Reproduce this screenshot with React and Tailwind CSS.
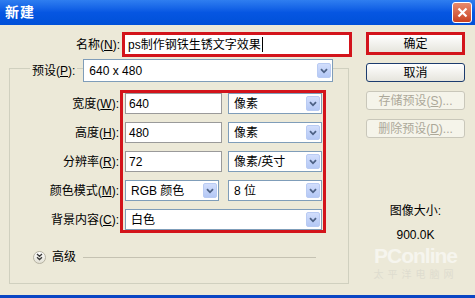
import React from 'react'

const FONT = { fontFamily: '"Liberation Sans", "Noto Sans CJK SC", sans-serif' }

function Arrow() {
  return (
    <span className="w-[14px] h-[15px] mr-[1px] shrink-0 rounded-[2px] border border-[#b9cbf3] bg-linear-to-b from-[#d2defc] to-[#b4c8f5] flex items-center justify-center">
      <svg width="8" height="6" viewBox="0 0 8 6">
        <path d="M1 1.2 L4 4.3 L7 1.2" stroke="#4d6185" strokeWidth="1.8" fill="none" />
      </svg>
    </span>
  )
}

function Select({ value, className = '' }) {
  return (
    <div className={`flex items-center bg-white border border-[#7f9db9] ${className}`}>
      <span className="flex-1 pl-[5px] truncate">{value}</span>
      <Arrow />
    </div>
  )
}

function Input({ value, className = '' }) {
  return (
    <div className={`flex items-center bg-white border border-[#9a9a9a] ${className}`}>
      <span className="pl-[3px]">{value}</span>
    </div>
  )
}

function Btn({ children, disabled }) {
  return (
    <div className={`h-[19px] flex items-center justify-center rounded-[3px] border ${
      disabled
        ? 'border-[#c9c7ba] text-[#aca899] bg-[#f5f4ea]'
        : 'border-[#1c3c6e] text-black bg-linear-to-b from-white to-[#e6e5dd]'
    }`}>
      {children}
    </div>
  )
}

function Label({ children }) {
  return <div className="w-[110px] text-right pr-[1px] shrink-0">{children}</div>
}

const rows = [
  { label: <>宽度(<u>W</u>):</>, value: '640', unit: '像素' },
  { label: <>高度(<u>H</u>):</>, value: '480', unit: '像素' },
  { label: <>分辨率(<u>R</u>):</>, value: '72', unit: '像素/英寸' },
]

export default function App() {
  return (
    <div className="w-[475px] h-[298px] bg-[#ece9d8] flex flex-col text-[12px] text-black overflow-hidden" style={FONT}>
      {/* title bar */}
      <div className="h-[25px] shrink-0 flex items-center justify-between pl-[5px] pr-[3px] bg-linear-to-b from-[#2f7ef0] via-[#0656e2] to-[#0050d8]">
        <span className="text-white font-bold text-[14px] tracking-[1px]">新建</span>
        <span className="w-[20px] h-[21px] rounded-[3px] border border-white bg-linear-to-b from-[#e88a6c] to-[#c8401f] flex items-center justify-center">
          <svg width="11" height="11" viewBox="0 0 11 11">
            <path d="M1.5 1.5 L9.5 9.5 M9.5 1.5 L1.5 9.5" stroke="white" strokeWidth="2.2" />
          </svg>
        </span>
      </div>

      <div className="flex flex-1">
        {/* left */}
        <div className="w-[352px] pt-[7px] flex flex-col">
          <div className="flex items-center h-[25px]">
            <div className="w-[120px] text-right">名称(<u>N</u>):</div>
            <div className="ml-[2px] w-[230px] h-[25px] border-[3px] border-[#d3141b] bg-white flex items-center pl-[3px]">
              ps制作钢铁生锈文字效果<span className="w-px h-[15px] bg-black ml-[1px]" />
            </div>
          </div>

          <div className="mt-[11px] ml-[9px] w-[340px] h-[216px] border border-[#d0d0bf] flex flex-col">
            <div className="-mt-[10px] flex items-center h-[23px]">
              <span className="ml-[20px] px-[2px] bg-[#ece9d8]">预设(<u>P</u>):</span>
              <Select value="640 x 480" className="ml-[6px] w-[250px] h-[23px]" />
            </div>

            <div className="mt-[8px] flex">
              <div className="flex flex-col gap-[8px] pt-[3px]">
                {rows.map((r, i) => (
                  <div key={i} className="h-[21px] flex items-center"><Label>{r.label}</Label></div>
                ))}
                <div className="h-[21px] flex items-center"><Label>颜色模式(<u>M</u>):</Label></div>
                <div className="h-[21px] flex items-center"><Label>背景内容(<u>C</u>):</Label></div>
              </div>
              <div className="w-[206px] border-[3px] border-[#d3141b] pl-[2px] pr-[1px] flex flex-col gap-[8px]">
                {rows.map((r, i) => (
                  <div key={i} className="h-[21px] flex gap-[6px]">
                    <Input value={r.value} className="w-[97px]" />
                    <Select value={r.unit} className="flex-1" />
                  </div>
                ))}
                <div className="h-[21px] flex gap-[9px]">
                  <Select value="RGB 颜色" className="w-[94px]" />
                  <Select value="8 位" className="flex-1" />
                </div>
                <div className="h-[21px] flex">
                  <Select value="白色" className="flex-1" />
                </div>
              </div>
            </div>

            <div className="mt-[17px] flex items-center h-[14px]">
              <span className="ml-[23px] w-[13px] h-[13px] rounded-full border border-[#b5b2a2] bg-linear-to-b from-white to-[#e2e0d4] flex items-center justify-center">
                <svg width="7" height="8" viewBox="0 0 7 8">
                  <path d="M1 1 L3.5 3.3 L6 1 M1 4.3 L3.5 6.6 L6 4.3" stroke="#3a3a3a" strokeWidth="1.3" fill="none" />
                </svg>
              </span>
              <span className="ml-[6px]">高级</span>
              <span className="ml-[7px] w-[233px] h-px bg-[#c5c2b2]" />
            </div>
          </div>
        </div>

        {/* right */}
        <div className="ml-[14px] w-[99px] pt-[7px] flex flex-col">
          <div className="h-[23px] border-[3px] border-[#d3141b] bg-linear-to-b from-white to-[#e6e5dd] flex items-center justify-center">
            确定
          </div>
          <div className="mt-[8px] flex flex-col gap-[9px]">
            <Btn>取消</Btn>
            <Btn disabled>存储预设(<u>S</u>)...</Btn>
            <Btn disabled>删除预设(<u>D</u>)...</Btn>
          </div>
          <div className="mt-[66px] text-center leading-[14px]">图像大小:</div>
          <div className="mt-[10px] text-center leading-[14px]">900.0K</div>
          <div className="mt-[4px] flex flex-col items-center">
            <div className="h-[20px] leading-[20px] text-[21px] font-bold tracking-[-1px] text-[#f6f5ee]">PConline</div>
            <div className="mt-[3px] h-[12px] leading-[12px] text-[10px] tracking-[4px] text-[#dedccf]">太平洋电脑网</div>
          </div>
        </div>
      </div>

      <div className="h-[3px] shrink-0 bg-[#0a46c4]" />
    </div>
  )
}
